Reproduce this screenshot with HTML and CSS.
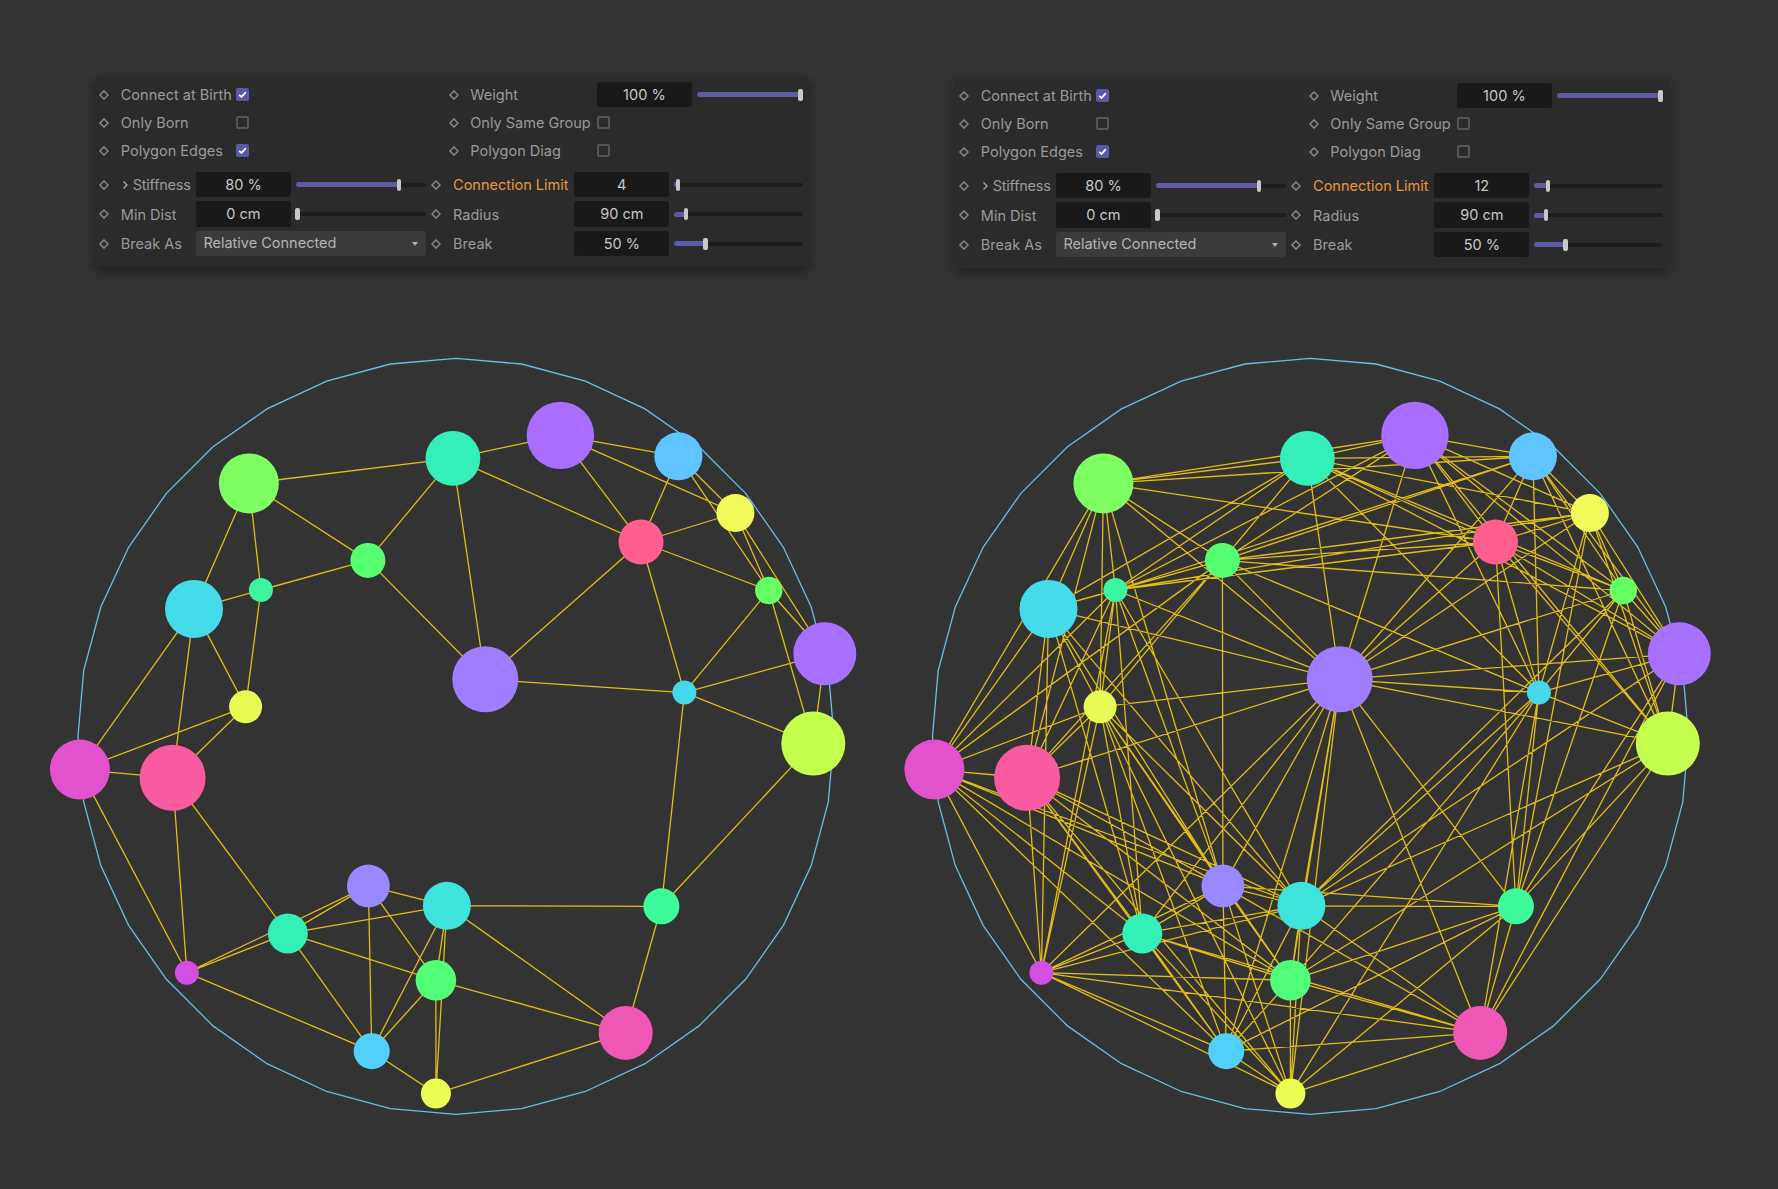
FILE: index.html
```html
<!DOCTYPE html>
<html lang="en">
<head>
<meta charset="utf-8">
<title>Connection Limit comparison</title>
<link rel="stylesheet" href="styles.css">
</head>
<body>
<svg class="defs" width="0" height="0" aria-hidden="true">
  <symbol id="dia" viewBox="0 0 10 10"><path d="M5 .9 9.1 5 5 9.1 .9 5Z" fill="none" stroke="#8c8c8c" stroke-width="1.4"/></symbol>
  <symbol id="tick" viewBox="0 0 13 13"><path d="M3.2 6.8 5.5 9 9.8 4.2" fill="none" stroke="#fff" stroke-width="1.8"/></symbol>
</svg>
<main class="page">
  <div class="panels">
    <section class="panel">
      <div class="group top">
        <div class="prop"><svg class="dia"><use href="#dia"/></svg><span class="label l-a">Connect at Birth</span><span class="check on"><svg><use href="#tick"/></svg></span></div>
        <div class="prop"><svg class="dia"><use href="#dia"/></svg><span class="label l-b">Weight</span><span class="field">100 %</span><span class="slider s-c"><i class="fill" style="width:103.6px"></i></span></div>
        <div class="prop"><svg class="dia"><use href="#dia"/></svg><span class="label l-a">Only Born</span><span class="check"></span></div>
        <div class="prop"><svg class="dia"><use href="#dia"/></svg><span class="label l-b">Only Same Group</span><span class="check"></span></div>
        <div class="prop"><svg class="dia"><use href="#dia"/></svg><span class="label l-a">Polygon Edges</span><span class="check on"><svg><use href="#tick"/></svg></span></div>
        <div class="prop"><svg class="dia"><use href="#dia"/></svg><span class="label l-b">Polygon Diag</span><span class="check"></span></div>
      </div>
      <div class="group bottom">
        <div class="prop"><svg class="dia"><use href="#dia"/></svg><span class="label l-c"><svg class="chev" viewBox="0 0 7 10"><path d="M1.5 1.5 5 5 1.5 8.500" fill="none" stroke="#a8a8a8" stroke-width="1.3"/></svg><span class="tight">Stiffness</span></span><span class="field">80 %</span><span class="slider s-a"><i class="fill" style="width:102.700px"></i></span></div>
        <div class="prop"><svg class="dia"><use href="#dia"/></svg><span class="label l-d accent">Connection Limit</span><span class="field">4</span><span class="slider s-b"><i class="fill" style="width:3.700px"></i></span></div>
        <div class="prop"><svg class="dia"><use href="#dia"/></svg><span class="label l-c">Min Dist</span><span class="field">0 cm</span><span class="slider s-a"><i class="fill" style="width:1.300px"></i></span></div>
        <div class="prop"><svg class="dia"><use href="#dia"/></svg><span class="label l-d">Radius</span><span class="field">90 cm</span><span class="slider s-b"><i class="fill" style="width:11.400px"></i></span></div>
        <div class="prop"><svg class="dia"><use href="#dia"/></svg><span class="label l-c">Break As</span><span class="select">Relative Connected</span></div>
        <div class="prop"><svg class="dia"><use href="#dia"/></svg><span class="label l-d">Break</span><span class="field">50 %</span><span class="slider s-b"><i class="fill" style="width:31px"></i></span></div>
      </div>
    </section>
    <section class="panel panel-second">
      <div class="group top">
        <div class="prop"><svg class="dia"><use href="#dia"/></svg><span class="label l-a">Connect at Birth</span><span class="check on"><svg><use href="#tick"/></svg></span></div>
        <div class="prop"><svg class="dia"><use href="#dia"/></svg><span class="label l-b">Weight</span><span class="field">100 %</span><span class="slider s-c"><i class="fill" style="width:103.6px"></i></span></div>
        <div class="prop"><svg class="dia"><use href="#dia"/></svg><span class="label l-a">Only Born</span><span class="check"></span></div>
        <div class="prop"><svg class="dia"><use href="#dia"/></svg><span class="label l-b">Only Same Group</span><span class="check"></span></div>
        <div class="prop"><svg class="dia"><use href="#dia"/></svg><span class="label l-a">Polygon Edges</span><span class="check on"><svg><use href="#tick"/></svg></span></div>
        <div class="prop"><svg class="dia"><use href="#dia"/></svg><span class="label l-b">Polygon Diag</span><span class="check"></span></div>
      </div>
      <div class="group bottom">
        <div class="prop"><svg class="dia"><use href="#dia"/></svg><span class="label l-c"><svg class="chev" viewBox="0 0 7 10"><path d="M1.5 1.5 5 5 1.5 8.500" fill="none" stroke="#a8a8a8" stroke-width="1.3"/></svg><span class="tight">Stiffness</span></span><span class="field">80 %</span><span class="slider s-a"><i class="fill" style="width:102.700px"></i></span></div>
        <div class="prop"><svg class="dia"><use href="#dia"/></svg><span class="label l-d accent">Connection Limit</span><span class="field">12</span><span class="slider s-b"><i class="fill" style="width:13.600px"></i></span></div>
        <div class="prop"><svg class="dia"><use href="#dia"/></svg><span class="label l-c">Min Dist</span><span class="field">0 cm</span><span class="slider s-a"><i class="fill" style="width:1.300px"></i></span></div>
        <div class="prop"><svg class="dia"><use href="#dia"/></svg><span class="label l-d">Radius</span><span class="field">90 cm</span><span class="slider s-b"><i class="fill" style="width:11.400px"></i></span></div>
        <div class="prop"><svg class="dia"><use href="#dia"/></svg><span class="label l-c">Break As</span><span class="select">Relative Connected</span></div>
        <div class="prop"><svg class="dia"><use href="#dia"/></svg><span class="label l-d">Break</span><span class="field">50 %</span><span class="slider s-b"><i class="fill" style="width:31px"></i></span></div>
      </div>
    </section>
  </div>
  <svg id="graphs" class="graphs" viewBox="0 0 1778 849" aria-label="Two node graphs: connection limit 4 and 12"></svg>
</main>
<script src="graph.js"></script>
</body>
</html>
```

FILE: styles.css
```css
* { box-sizing: border-box; }
html, body { margin: 0; height: 100%; }
body {
  background: #333333;
  color: #9a9a9a;
  font-family: Inter, "Liberation Sans", sans-serif;
  font-size: 14.5px;
  overflow: hidden;
}
.defs { position: absolute; }
.page { width: 1778px; height: 1189px; display: flex; flex-direction: column; }
.panels {
  display: flex;
  align-items: flex-start;
  gap: 146px;
  padding: 78px 0 0 94.5px;
  height: 340px;
}
.panel {
  width: 714px;
  height: 189px;
  padding-top: 2.5px;
  background: #2b2b2b;
  box-shadow: 0 4px 12px rgba(0, 0, 0, .42);
  flex: none;
}
.panel-second { margin-top: 1px; }
.group { display: grid; }
.top { grid-template-columns: 349.5px 1fr; grid-auto-rows: 28px; margin-bottom: 5.25px; }
.bottom { grid-template-columns: 332.3px 1fr; grid-auto-rows: 29.5px; }
.prop { display: flex; align-items: center; min-width: 0; }
.dia { width: 10px; height: 10px; margin: 0 11.6px 0 4.7px; flex: none; }
.label { white-space: nowrap; flex: none; display: flex; align-items: center; }
.l-a { width: 115.3px; }
.l-b { width: 126.4px; }
.l-c { width: 75px; }
.l-d { width: 121px; }
.accent { color: #e9973d; }
.chev { width: 7px; height: 10px; margin: 0 4px 0 1px; flex: none; }
.tight { letter-spacing: -.25px; }
.check {
  width: 13px;
  height: 13px;
  border: 2px solid #565656;
  border-radius: 2px;
  flex: none;
}
.check.on { background: #5a58a8; border: 0; }
.check.on svg { display: block; width: 13px; height: 13px; }
.field {
  width: 95.4px;
  height: 25.4px;
  flex: none;
  display: flex;
  align-items: center;
  justify-content: center;
  background: #191919;
  border-radius: 3px;
  color: #c8c8c8;
}
.slider {
  position: relative;
  height: 4px;
  margin-left: 5px;
  background: #1d1d1d;
  border-radius: 2px;
  flex: none;
  display: block;
}
.s-a { width: 130px; }
.s-b { width: 128.400px; }
.s-c { width: 105.600px; }
.fill {
  position: absolute;
  left: 0;
  top: -.5px;
  height: 5px;
  background: #5c5ba6;
  border-radius: 2.5px;
  display: block;
}
.fill::after {
  content: "";
  position: absolute;
  right: -2.25px;
  top: -3.500px;
  width: 4.500px;
  height: 12px;
  background: #c8c8c8;
  border-radius: 2px;
}
.select {
  position: relative;
  width: 230.300px;
  height: 25.400px;
  flex: none;
  display: flex;
  align-items: center;
  padding: 0 0 1px 7.600px;
  background: #3b3b3b;
  border-radius: 3px;
  color: #b4b4b4;
}
.select::after {
  content: "";
  position: absolute;
  right: 8px;
  top: 11.500px;
  border: 3.500px solid transparent;
  border-top: 4px solid #b0b0b0;
  border-bottom: 0;
}
.graphs { display: block; width: 1778px; height: 849px; flex: none; }
.ring { fill: none; stroke: #6abde3; stroke-width: 1.3; }
.edge { fill: none; stroke: #e0bd18; stroke-width: 1.3; }
```

FILE: graph.js
```js
// Node positions, radii and colours are shared by both graphs; the edges are
// each node's N nearest neighbours, with N the panel's Connection Limit.
var NODES = [
  [530.4, 95.4, 33.7, "#a96eff"], [422.9, 118.4, 27.4, "#34f0b8"], [218.9, 143.4, 30, "#7dff62"],
  [648.4, 116.3, 24, "#5fc4ff"], [705.4, 173, 19, "#f0fa5a"], [611, 202, 22.5, "#ff5f8f"],
  [337.9, 220.4, 17.5, "#55ff70"], [230.9, 250, 12, "#3cf5a0"], [738.8, 250.5, 13.7, "#66ff66"],
  [164, 268.9, 29, "#45dcea"], [794.8, 313.8, 31.5, "#a870ff"], [455.3, 339.3, 33, "#a07cff"],
  [654.4, 352.6, 12, "#44d8ea"], [215.6, 366.8, 16.5, "#e8fb55"], [783.3, 403.6, 32, "#c4ff50"],
  [49.9, 429.6, 30, "#e252cc"], [142.6, 437.8, 33, "#fa5aa0"], [338.4, 545.9, 21.4, "#9988ff"],
  [416.9, 565.8, 24, "#3ee3dc"], [631.4, 566.3, 18, "#3dfa9a"], [257.8, 593.4, 20, "#33f0b6"],
  [156.9, 632.7, 12, "#d24fe4"], [405.9, 640.3, 20.3, "#52fd7a"], [595.7, 692.9, 27, "#f056b6"],
  [341.7, 711.2, 18, "#50d0fb"], [405.9, 753.6, 15, "#ebfd55"]
];
var SVG_NS = "http://www.w3.org/2000/svg";

function el(parent, name, attrs) {
  var node = document.createElementNS(SVG_NS, name);
  for (var key in attrs) node.setAttribute(key, attrs[key]);
  parent.appendChild(node);
  return node;
}

function edgePath(limit) {
  var seen = {}, d = "";
  NODES.forEach(function (a, i) {
    NODES.map(function (b, j) {
      return { j: j, dist: Math.hypot(a[0] - b[0], a[1] - b[1]) };
    }).filter(function (o) { return o.j !== i; })
      .sort(function (p, q) { return p.dist - q.dist; })
      .slice(0, limit)
      .forEach(function (o) {
        var key = Math.min(i, o.j) + "-" + Math.max(i, o.j);
        if (seen[key]) return;
        seen[key] = true;
        var b = NODES[o.j];
        d += "M" + a[0] + " " + a[1] + "L" + b[0] + " " + b[1];
      });
  });
  return d;
}

function ringPoints() {
  var pts = [];
  for (var deg = 0; deg < 360; deg += 10) {
    var t = deg * Math.PI / 180;
    pts.push((426 + 378 * Math.sin(t)).toFixed(1) + "," + (396.3 - 378 * Math.cos(t)).toFixed(1));
  }
  return pts.join(" ");
}

function drawGraph(root, offsetX, limit) {
  var g = el(root, "g", { transform: "translate(" + offsetX + " 0)" });
  el(g, "polygon", { "class": "ring", points: ringPoints() });
  el(g, "path", { "class": "edge", d: edgePath(limit) });
  NODES.forEach(function (n) {
    el(g, "circle", { cx: n[0], cy: n[1], r: n[2], fill: n[3] });
  });
}

var root = document.getElementById("graphs");
drawGraph(root, 30, 4);
drawGraph(root, 884.5, 12);
```
